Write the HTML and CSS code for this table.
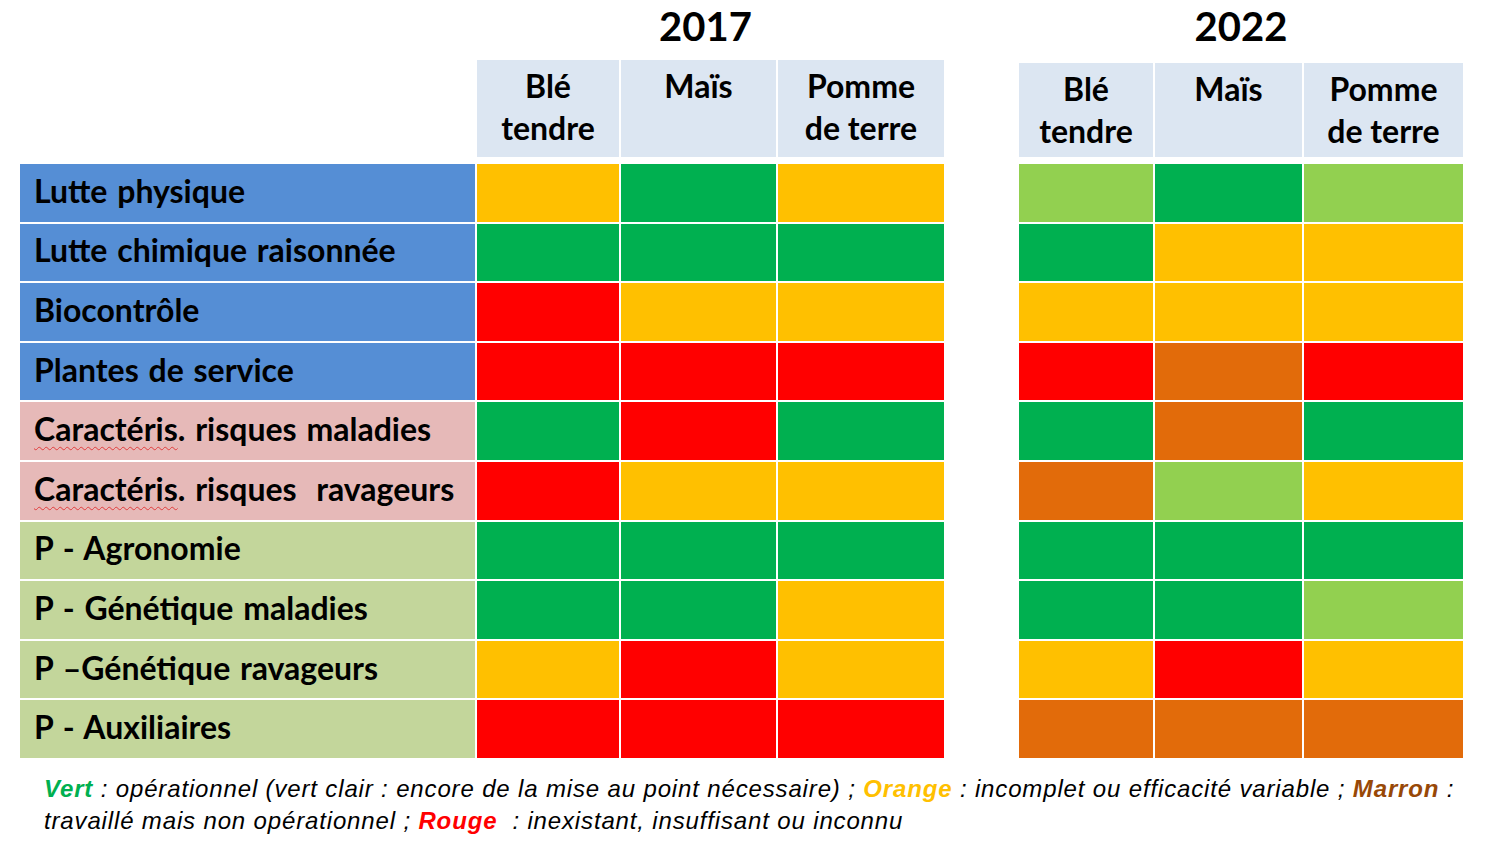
FILE: index.html
```html
<!DOCTYPE html>
<html lang="fr">
<head>
<meta charset="utf-8">
<title>Tableau 2017 / 2022</title>
<link rel="stylesheet" href="styles.css">
</head>
<body>
<div class="page">
  <div class="grid">
    <div class="blank"></div>
    <div class="year y2017">2017</div>
    <div class="spacer"></div>
    <div class="year y2022">2022</div>

    <div class="blank"></div>
    <div class="head">Blé<br>tendre</div>
    <div class="head">Maïs</div>
    <div class="head">Pomme<br>de terre</div>
    <div class="spacer"></div>
    <div class="head late">Blé<br>tendre</div>
    <div class="head late">Maïs</div>
    <div class="head late">Pomme<br>de terre</div>

    <div class="label blue">Lutte physique</div>
    <div class="c o"></div><div class="c g"></div><div class="c o"></div><div class="spacer"></div>
    <div class="c lg"></div><div class="c g"></div><div class="c lg"></div>

    <div class="label blue">Lutte chimique raisonnée</div>
    <div class="c g"></div><div class="c g"></div><div class="c g"></div><div class="spacer"></div>
    <div class="c g"></div><div class="c o"></div><div class="c o"></div>

    <div class="label blue">Biocontrôle</div>
    <div class="c r"></div><div class="c o"></div><div class="c o"></div><div class="spacer"></div>
    <div class="c o"></div><div class="c o"></div><div class="c o"></div>

    <div class="label blue">Plantes de service</div>
    <div class="c r"></div><div class="c r"></div><div class="c r"></div><div class="spacer"></div>
    <div class="c r"></div><div class="c b"></div><div class="c r"></div>

    <div class="label pink"><span class="spell">Caractéris</span>. risques maladies</div>
    <div class="c g"></div><div class="c r"></div><div class="c g"></div><div class="spacer"></div>
    <div class="c g"></div><div class="c b"></div><div class="c g"></div>

    <div class="label pink"><span class="spell">Caractéris</span>. risques&nbsp; ravageurs</div>
    <div class="c r"></div><div class="c o"></div><div class="c o"></div><div class="spacer"></div>
    <div class="c b"></div><div class="c lg"></div><div class="c o"></div>

    <div class="label sage">P - Agronomie</div>
    <div class="c g"></div><div class="c g"></div><div class="c g"></div><div class="spacer"></div>
    <div class="c g"></div><div class="c g"></div><div class="c g"></div>

    <div class="label sage">P - Génétique maladies</div>
    <div class="c g"></div><div class="c g"></div><div class="c o"></div><div class="spacer"></div>
    <div class="c g"></div><div class="c g"></div><div class="c lg"></div>

    <div class="label sage">P –Génétique ravageurs</div>
    <div class="c o"></div><div class="c r"></div><div class="c o"></div><div class="spacer"></div>
    <div class="c o"></div><div class="c r"></div><div class="c o"></div>

    <div class="label sage">P - Auxiliaires</div>
    <div class="c r"></div><div class="c r"></div><div class="c r"></div><div class="spacer"></div>
    <div class="c b"></div><div class="c b"></div><div class="c b"></div>
  </div>

  <p class="legend"><b class="k-vert">Vert</b> : opérationnel (vert clair : encore de la mise au point nécessaire) ; <b class="k-orange">Orange</b> : incomplet ou efficacité variable ; <b class="k-marron">Marron</b> :<br>travaillé mais non opérationnel ; <b class="k-rouge">Rouge</b> &nbsp;: inexistant, insuffisant ou inconnu</p>
</div>
</body>
</html>
```

FILE: styles.css
```css
html, body {
  margin: 0;
  padding: 0;
  background: #ffffff;
}

.page {
  width: 1490px;
  height: 845px;
  padding-left: 20px;
  box-sizing: border-box;
  font-family: Lato, "Open Sans", sans-serif;
  color: #000;
}

.grid {
  display: grid;
  grid-template-columns: 455px 142px 155px 166px 71px 134px 147px 159px;
  grid-template-rows: 58px 102px repeat(10, 57.6px);
  column-gap: 2px;
  row-gap: 2px;
}

.year {
  grid-column: span 3;
  font-weight: 700;
  font-size: 40px;
  line-height: 1;
  text-align: center;
  padding-top: 6px;
}

.y2017 {
  padding-right: 10px;
}

.head {
  background: #dce6f2;
  font-weight: 700;
  font-size: 32px;
  line-height: 42px;
  text-align: center;
  padding-top: 5px;
  margin-bottom: 5px;
}

.head.late {
  margin-top: 3px;
}

.label {
  display: flex;
  align-items: center;
  padding-left: 14px;
  padding-bottom: 5px;
  font-weight: 700;
  font-size: 32px;
  word-spacing: 2px;
  white-space: pre;
}

.blue { background: #558ed5; }
.pink { background: #e6b9b8; }
.sage { background: #c3d69b; }

.spell {
  text-decoration: underline wavy #e03c3c;
  text-decoration-thickness: 1px;
  text-underline-offset: 5px;
}

.c.o { background: #ffc000; }
.c.g { background: #00b050; }
.c.r { background: #ff0000; }
.c.lg { background: #92d050; }
.c.b { background: #e26b0a; }

.legend {
  margin: 15px 0 0 24px;
  font-family: "Liberation Sans", Arial, sans-serif;
  font-style: italic;
  font-size: 24px;
  letter-spacing: 0.85px;
  line-height: 32px;
  white-space: nowrap;
  color: #000;
}

.legend b {
  font-weight: 700;
}

.k-vert { color: #00b050; }
.k-orange { color: #ffc000; }
.k-marron { color: #984807; }
.k-rouge { color: #ff0000; }
```
